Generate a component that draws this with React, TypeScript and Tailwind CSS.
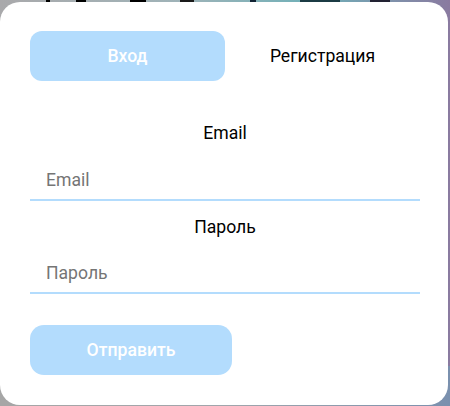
import React from "react";

export default function App() {
  return (
    <div
      className="relative w-[450px] h-[406px] overflow-hidden pt-[2px] pr-[2px] pb-[1px] flex flex-col bg-[linear-gradient(90deg,#a9a9ab_0%,#9fb3b8_40%,#6fb0b8_70%,#8a7aa0_100%)]"
      style={{ fontFamily: "Roboto, 'Liberation Sans', sans-serif" }}
    >
      {/* blurred background behind the modal */}
      <div className="absolute left-0 right-0 bottom-0 h-[40px] bg-[linear-gradient(90deg,#a6a6a6_0%,#a0a6ac_50%,#7a90ae_100%)]" />
      <div className="absolute top-0 left-0 right-0 h-[2px] flex">
        <div className="ml-[46px] w-[4px] bg-black" />
        <div className="ml-[26px] w-[10px] bg-black" />
        <div className="ml-[44px] w-[16px] bg-black" />
        <div className="ml-[34px] w-[14px] bg-[#1a1a1a]" />
        <div className="ml-[56px] w-[6px] bg-[#123]" />
        <div className="ml-[44px] w-[40px] bg-[#1b3b44]" />
        <div className="ml-[30px] w-[20px] bg-[#223]" />
      </div>

      {/* card */}
      <div className="relative flex-1 bg-white rounded-[20px] pt-[29px] pl-[30px] pr-[28px] flex flex-col items-stretch">
        <div className="flex">
          <button className="w-[195px] h-[50px] rounded-[12px] bg-[#b3dcfd] text-white text-[17.6px] font-medium">
            Вход
          </button>
          <button className="flex-1 h-[50px] text-black text-[17.6px]">
            Регистрация
          </button>
        </div>

        <div className="mt-[40px] flex flex-col">
          <label className="text-center text-[17.6px] leading-[24px] text-black">Email</label>
          <input
            className="mt-[15px] h-[41px] pl-[16px] border-b-2 border-[#b3dcfd] text-[17.6px] outline-none placeholder:text-[#757575]"
            placeholder="Email"
          />
          <label className="mt-[14px] text-center text-[17.6px] leading-[24px] text-black">Пароль</label>
          <input
            className="mt-[14px] h-[41px] pl-[16px] border-b-2 border-[#b3dcfd] text-[17.6px] outline-none placeholder:text-[#757575]"
            placeholder="Пароль"
            type="password"
          />
        </div>

        <button className="mt-[31px] w-[202px] h-[50px] rounded-[14px] bg-[#b3dcfd] text-white text-[17.6px] font-medium">
          Отправить
        </button>
      </div>
    </div>
  );
}
